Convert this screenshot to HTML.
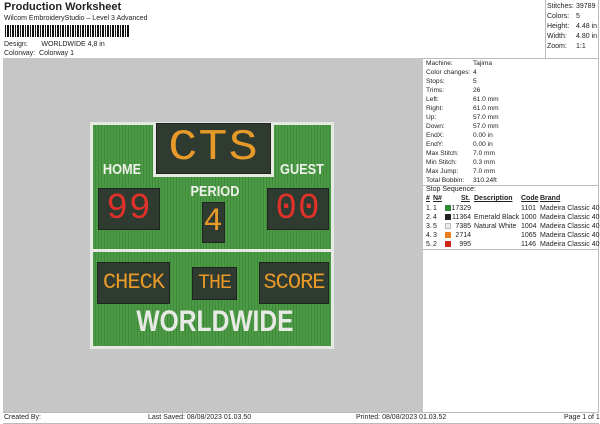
<!DOCTYPE html>
<html><head><style>
*{margin:0;padding:0;box-sizing:border-box}
body{width:600px;height:424px;background:#fff;position:relative;font-family:"Liberation Sans",sans-serif;font-size:7px;color:#222;overflow:hidden}
.a{position:absolute;white-space:nowrap}
.box{position:absolute;background:#2f3a30;border:1px solid #1e241e}
.seg{position:absolute;font-family:"Liberation Mono",monospace;text-align:center;font-weight:normal;letter-spacing:1px}
.lbl{position:absolute;color:#eef0ea;font-weight:bold;text-align:center;transform:scaleX(.85)}
.r{position:absolute;white-space:nowrap;font-size:7px}
.sw{position:absolute;width:6px;height:6px}
</style></head><body>
<div class="a" style="left:4px;top:1px;font-size:11px;font-weight:bold">Production Worksheet</div>
<div class="a" style="left:4px;top:15px">Wilcom EmbroideryStudio – Level 3 Advanced</div>
<div class="a" style="left:5px;top:25px;width:125px;height:12px;background:repeating-linear-gradient(90deg,#111 0 1px,#fff 1px 2px,#111 2px 4px,#fff 4px 5px)"></div>
<div class="a" style="left:4px;top:41px">Design:&nbsp;&nbsp;&nbsp;&nbsp;&nbsp;&nbsp;&nbsp;WORLDWIDE 4,8 in</div>
<div class="a" style="left:4px;top:50px">Colorway:&nbsp;&nbsp;Colorway 1</div>
<div class="a" style="left:545px;top:0;width:1px;height:58px;background:#bbb"></div>
<div class="a" style="left:598px;top:0;width:1px;height:412px;background:#bbb"></div>
<div class="a" style="left:547px;top:2px;line-height:10px">Stitches:<br>Colors:<br>Height:<br>Width:<br>Zoom:</div>
<div class="a" style="left:576px;top:2px;line-height:10px">39789<br>5<br>4.48 in<br>4.80 in<br>1:1</div>
<div class="a" style="left:3px;top:58px;width:420px;height:354px;background:#c6c6c6"></div>
<div class="a" style="left:423px;top:58px;width:176px;height:1px;background:#bbb"></div>
<div class="a" style="left:426px;top:59px;line-height:9px;font-size:6.6px">Machine:<br>Color changes:<br>Stops:<br>Trims:<br>Left:<br>Right:<br>Up:<br>Down:<br>EndX:<br>EndY:<br>Max Stitch:<br>Min Stitch:<br>Max Jump:<br>Total Bobbin:</div>
<div class="a" style="left:473px;top:59px;line-height:9px;font-size:6.6px">Tajima<br>4<br>5<br>26<br>61.0 mm<br>61.0 mm<br>57.0 mm<br>57.0 mm<br>0.00 in<br>0.00 in<br>7.0 mm<br>0.3 mm<br>7.0 mm<br>310.24ft</div>
<div class="a" style="left:423px;top:185px;width:176px;height:1px;background:#bbb"></div>
<div class="r" style="left:426px;top:186px">Stop Sequence:</div>
<div class="r" style="left:426px;top:195px;font-weight:bold;text-decoration:underline">#</div>
<div class="r" style="left:433px;top:195px;font-weight:bold;text-decoration:underline">N#</div>
<div class="r" style="left:461px;top:195px;font-weight:bold;text-decoration:underline">St.</div>
<div class="r" style="left:474px;top:195px;font-weight:bold;text-decoration:underline">Description</div>
<div class="r" style="left:521px;top:195px;font-weight:bold;text-decoration:underline">Code</div>
<div class="r" style="left:540px;top:195px;font-weight:bold;text-decoration:underline">Brand</div>

<div class="r" style="left:426px;top:204px;line-height:9px">1.<br>2.<br>3.<br>4.<br>5.</div>
<div class="r" style="left:433px;top:204px;line-height:9px">1<br>4<br>5<br>3<br>2</div>
<div class="sw" style="left:445px;top:205px;background:#2e8b3a"></div>
<div class="sw" style="left:445px;top:214px;background:#222"></div>
<div class="sw" style="left:445px;top:223px;background:#eee;border:1px solid #bbb"></div>
<div class="sw" style="left:445px;top:232px;background:#e8801e"></div>
<div class="sw" style="left:445px;top:241px;background:#d0261e"></div>
<div class="r" style="left:450px;width:21px;text-align:right;top:204px;line-height:9px">17329<br>11364<br>7385<br>2714<br>995</div>
<div class="r" style="left:474px;top:204px;line-height:9px">&nbsp;<br>Emerald Black<br>Natural White</div>
<div class="r" style="left:521px;top:204px;line-height:9px">1101<br>1000<br>1004<br>1065<br>1146</div>
<div class="r" style="left:540px;top:204px;line-height:9px">Madeira Classic 40<br>Madeira Classic 40<br>Madeira Classic 40<br>Madeira Classic 40<br>Madeira Classic 40</div>
<div class="a" style="left:423px;top:249px;width:176px;height:1px;background:#bbb"></div>
<div class="a" style="left:3px;top:412px;width:596px;height:1px;background:#bbb"></div>
<div class="a" style="left:3px;top:423px;width:596px;height:1px;background:#bbb"></div>
<div class="a" style="left:4px;top:414px">Created By:</div>
<div class="a" style="left:148px;top:414px">Last Saved: 08/08/2023 01.03.50</div>
<div class="a" style="left:356px;top:414px">Printed: 08/08/2023 01.03.52</div>
<div class="a" style="left:564px;top:414px">Page 1 of 1</div>

<div class="a" style="left:90px;top:122px;width:244px;height:227px;background:#e6e8e2;padding:3px">
<div style="width:100%;height:100%;background:repeating-linear-gradient(90deg,#4d9a46 0 2px,#3f8a3a 2px 3px)"></div></div>
<div class="a" style="left:153px;top:122px;width:121px;height:55px;background:#e6e8e2"></div>
<div class="box" style="left:156px;top:123px;width:115px;height:51px"></div>
<div class="seg" style="left:156px;top:124px;width:115px;font-size:44px;line-height:48px;color:#e89a28;transform:scaleX(1.1)">CTS</div>
<div class="lbl" style="left:92px;top:161px;width:60px;font-size:15px">HOME</div>
<div class="lbl" style="left:272px;top:161px;width:60px;font-size:15px">GUEST</div>
<div class="lbl" style="left:180px;top:183px;width:70px;font-size:15px">PERIOD</div>
<div class="box" style="left:98px;top:188px;width:62px;height:42px"></div>
<div class="seg" style="left:98px;top:189px;width:62px;font-size:36px;line-height:40px;color:#e0312a">99</div>
<div class="box" style="left:267px;top:188px;width:62px;height:42px"></div>
<div class="seg" style="left:267px;top:189px;width:62px;font-size:36px;line-height:40px;color:#e0312a">00</div>
<div class="box" style="left:202px;top:202px;width:23px;height:41px"></div>
<div class="seg" style="left:202px;top:203px;width:23px;font-size:32px;line-height:38px;color:#e89a28">4</div>
<div class="a" style="left:93px;top:249px;width:238px;height:3px;background:#e6e8e2"></div>
<div class="box" style="left:97px;top:262px;width:73px;height:42px"></div>
<div class="seg" style="left:97px;top:264px;width:73px;font-size:22px;line-height:38px;color:#e89a28;letter-spacing:-1px">CHECK</div>
<div class="box" style="left:192px;top:267px;width:45px;height:33px"></div>
<div class="seg" style="left:192px;top:268px;width:45px;font-size:20px;line-height:31px;color:#e89a28;letter-spacing:-1px">THE</div>
<div class="box" style="left:259px;top:262px;width:70px;height:42px"></div>
<div class="seg" style="left:259px;top:264px;width:70px;font-size:22px;line-height:38px;color:#e89a28;letter-spacing:-1px">SCORE</div>
<div class="lbl" style="left:115px;top:304px;width:200px;font-size:30px;line-height:36px;color:#e8eae6;transform:scaleX(.82)">WORLDWIDE</div>
</body></html>
